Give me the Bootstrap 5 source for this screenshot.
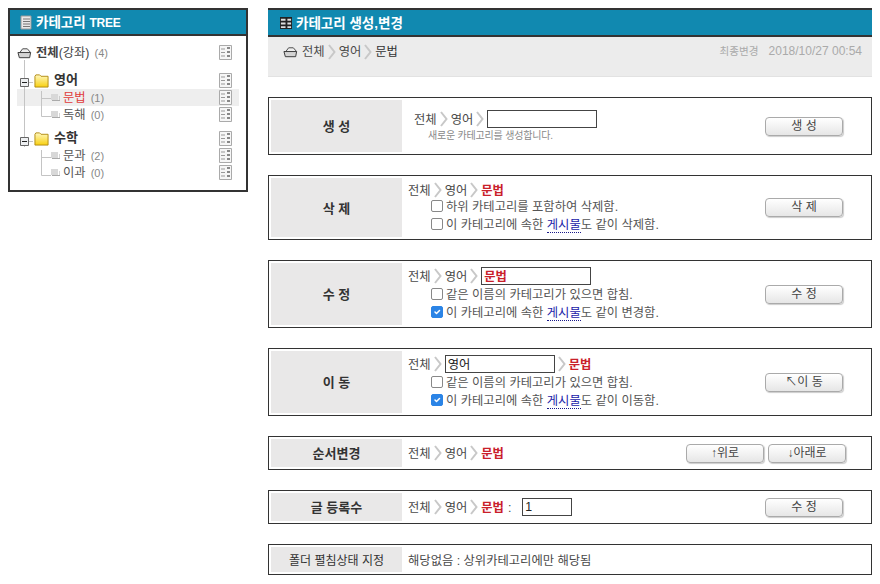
<!DOCTYPE html>
<html lang="ko">
<head>
    <meta charset="UTF-8">
    <meta name="viewport" content="width=device-width, initial-scale=1">
    <title>카테고리 TREE</title>
    <link href="https://cdn.jsdelivr.net/npm/bootstrap@5.3.0/dist/css/bootstrap.min.css" rel="stylesheet">
    <style>
        body { font-family: "Liberation Sans", "Noto Sans CJK KR", sans-serif; font-size: 12.3px; line-height: 18px; color: #4a4a4a; background: #fff; }
        .page-wrap { padding: 8px; width: 880px; gap: 20px; }
        .tree-panel { width: 240px; height: 184px; border: 2px solid #333; position: relative; flex: none; }
        .panel-head { height: 26px; background: #1189b0; border-bottom: 2px solid #333; color: #fff; font-size: 13.5px; font-weight: 700; padding-left: 10px; gap: 4px; }
        .panel-head span { padding-top: 2px; }
        .latin-word { font-size: 12px; letter-spacing: -.2px; }
        .tree-body { padding: 8px 7px 0 7px; }
        .tree-row { height: 17px; }
        .tree-row .tree-act { margin-left: auto; margin-right: 7px; }
        .tree-row.is-sel { background: #eeeeee; }
        .tree-root { font-weight: 700; color: #444; }
        .tree-root span { font-weight: 400; }
        .tree-count { color: #888; font-size: 11px; margin-left: 5px; font-weight: 400; }
        .tree-group { margin-top: 11px; padding-left: 17px; font-size: 13px; font-weight: 700; color: #333; }
        .tree-group.second { margin-top: 7px; }
        .tree-group > div { padding-bottom: 2px; }
        .tree-leaf { padding-left: 34px; color: #555; }
        .tree-leaf.is-sel { color: #e03a3a; }
        .tree-row svg.tree-folder { margin-right: 5px; }
        .tree-row svg.tree-doc { margin-right: 3px; }
        .tree-lines { position: absolute; left: 0; top: 0; pointer-events: none; }
        .right-col { width: 604px; flex: none; }
        .right-head { height: 29px; background: #1189b0; border-top: 2px solid #333; border-bottom: 2px solid #333; color: #fff; font-size: 13.5px; font-weight: 700; padding-left: 12px; gap: 4px; }
        .right-head span { padding-top: 2px; }
        .path-bar { height: 40px; background: #ececec; border-bottom: 1px solid #e2e2e2; padding: 6px 10px 0 15px; }
        .path-bar .path-end { color: #333; }
        .path-date { color: #aaa; margin-top: -1px; font-size: 12px; }
        .path-date b { font-weight: 400; font-size: 10.6px; margin-right: 10px; }
        .path-nav { gap: 3px; }
        .path-folder { margin-right: 1px; }
        .op-box { border: 1px solid #333; padding: 2px; margin-top: 20px; }
        .op-title { width: 131px; flex: none; background: #e9e8e8; color: #333; font-weight: 700; font-size: 13px; padding-top: 2px; }
        .op-title.plain { font-weight: 400; font-size: 12px; }
        .op-main { padding-left: 6px; flex: 1 1 auto; }
        .op-main.is-wide { padding-left: 12px; }
        .op-side { width: 104px; flex: none; }
        .op-lines { padding-top: 4px; }
        .tall-52 { height: 52px; }
        .tall-59 { height: 59px; }
        .tall-62 { height: 62px; }
        .tall-28 { height: 28px; }
        .tall-25 { height: 25px; }
        .crumb { gap: 3px; height: 18px; }
        .crumb span, .crumb em, .check-line > span, .plain-note { padding-top: 2px; }
        .crumb.is-first { padding-top: 10px; height: 28px; }
        .is-tight .crumb { height: 15px; }
        .crumb em { font-style: normal; color: #c9202a; font-weight: 700; }
        .colon-mark { margin-left: 1px; }
        .op-input { width: 110px; height: 18px; border: 1px solid #444; background: #fff; padding: 0 2px; font-size: 12.3px; line-height: 16px; color: #222; font-family: inherit; outline: 0; border-radius: 0; }
        .op-input.is-red { color: #c9202a; font-weight: 700; }
        .op-input.is-short { width: 50px; margin-left: 8px; }
        .check-line { padding-left: 23px; gap: 3px; height: 18px; color: #555; }
        .check-line .form-check-input { width: 12px; height: 12px; margin: 0; border-color: #888; border-radius: 2px; }
        .check-line .form-check-input:checked { background-color: #2b84e6; border-color: #2b84e6; }
        .post-word { color: #1a1aa8; border-bottom: 1px dotted #1a1a8a; line-height: 14px; }
        .hint-line { padding-left: 14px; padding-top: 1px; color: #888; font-size: 10px; line-height: 14px; letter-spacing: -.2px; }
        .old-btn { width: 78px; height: 19px; padding: 0; font-size: 12px; line-height: 17px; color: #444; border: 1px solid #aaa; border-radius: 4px; background: linear-gradient(#fff, #e6e6e6); box-shadow: 1px 1px 1px #ccc; }
        .old-btn:hover { color: #444; border-color: #aaa; }
        .order-btns { margin-right: 23px; }
    </style>
</head>
<body>
    <svg width="0" height="0" class="position-absolute">
        <defs><linearGradient id="fold-grad" x1="0" y1="0" x2="0" y2="1"><stop offset="0" stop-color="#fff8c0"/><stop offset="1" stop-color="#f8d010"/></linearGradient></defs>
        <symbol id="i-act" viewBox="0 0 13 15">
            <path d="M.5.5h12v14H.5z" fill="#f6f6f6" stroke="#aaa"/>
            <path d="M2 4h4M2 7.500h4M2 11h4" stroke="#999" fill="none"/>
            <path d="M8 2h3v2H8zM8 6h3v2H8zM8 10h3v2H8z" fill="#888"/>
        </symbol>
        <symbol id="i-open" viewBox="0 0 16 12">
            <path d="M3 5.500L6 1.500h5l3.500 4" fill="#eee" stroke="#444"/>
            <path d="M1 5.500h13.500l-1 5.500H2.500z" fill="#d4d4d4" stroke="#333"/>
        </symbol>
        <symbol id="i-folder" viewBox="0 0 16 15">
            <path d="M1 14.500V3l1-1.500h4L7.500 3H15v11.500z" fill="url(#fold-grad)" stroke="#b08a10"/>
        </symbol>
        <symbol id="i-doc" viewBox="0 0 9 8">
            <path d="M0 0h7v6H0z" fill="#d8d8d8"/><path d="M1 6.500h8V2" fill="none" stroke="#aaa"/>
        </symbol>
        <symbol id="i-chev" viewBox="0 0 8 16">
            <path d="M1 1l5.500 7L1 15" fill="none" stroke="#c8c8c8" stroke-width="2"/>
        </symbol>
        <symbol id="i-book" viewBox="0 0 12 15">
            <path d="M1 1h10v13H1z" fill="#e8e8e8" stroke="#999"/>
            <path d="M3 4h7M3 6.500h7M3 9h7M3 11.500h7" stroke="#777"/>
        </symbol>
        <symbol id="i-head" viewBox="0 0 13 13">
            <path d="M0 0h13v13H0z" fill="#222"/>
            <path d="M1 2h5v2H1zM1 6h5v2H1zM1 10h5v2H1zM8 2h4v2H8zM8 6h4v2H8zM8 10h4v2H8z" fill="#ddd"/>
        </symbol>
    </svg>

    <div class="page-wrap d-flex align-items-start">
        <div class="tree-panel">
            <div class="panel-head d-flex align-items-center">
                <svg width="12" height="15"><use href="#i-book"/></svg>
                <span>카테고리 <b class="latin-word">TREE</b></span>
            </div>
            <div class="tree-body">
                <div class="tree-row tree-root d-flex align-items-center">
                    <svg width="15" height="12" class="me-1"><use href="#i-open"/></svg>
                    <div>전체<span>(강좌)</span><span class="tree-count">(4)</span></div>
                    <svg class="tree-act" width="13" height="15"><use href="#i-act"/></svg>
                </div>
                <div class="tree-row tree-group d-flex align-items-center">
                    <svg class="tree-folder" width="15" height="15"><use href="#i-folder"/></svg>
                    <div>영어</div>
                    <svg class="tree-act" width="13" height="15"><use href="#i-act"/></svg>
                </div>
                <div class="tree-row tree-leaf is-sel d-flex align-items-center">
                    <svg class="tree-doc" width="9" height="8"><use href="#i-doc"/></svg>
                    <div>문법<span class="tree-count">(1)</span></div>
                    <svg class="tree-act" width="13" height="15"><use href="#i-act"/></svg>
                </div>
                <div class="tree-row tree-leaf d-flex align-items-center">
                    <svg class="tree-doc" width="9" height="8"><use href="#i-doc"/></svg>
                    <div>독해<span class="tree-count">(0)</span></div>
                    <svg class="tree-act" width="13" height="15"><use href="#i-act"/></svg>
                </div>
                <div class="tree-row tree-group second d-flex align-items-center">
                    <svg class="tree-folder" width="15" height="15"><use href="#i-folder"/></svg>
                    <div>수학</div>
                    <svg class="tree-act" width="13" height="15"><use href="#i-act"/></svg>
                </div>
                <div class="tree-row tree-leaf d-flex align-items-center">
                    <svg class="tree-doc" width="9" height="8"><use href="#i-doc"/></svg>
                    <div>문과<span class="tree-count">(2)</span></div>
                    <svg class="tree-act" width="13" height="15"><use href="#i-act"/></svg>
                </div>
                <div class="tree-row tree-leaf d-flex align-items-center">
                    <svg class="tree-doc" width="9" height="8"><use href="#i-doc"/></svg>
                    <div>이과<span class="tree-count">(0)</span></div>
                    <svg class="tree-act" width="13" height="15"><use href="#i-act"/></svg>
                </div>
            </div>
            <!-- connector lines over the tree, origin is 10,10 on the page -->
            <svg class="tree-lines" width="236" height="180">
                <path d="M14.500 50v87M18 72.500h5M18 131.500h5M31.500 81v25.500M31.500 88.500h9.500M31.500 106.500h9.500M31.500 140v25.500M31.500 147.500h9.500M31.500 165.500h9.500" fill="none" stroke="#c4c4c4"/>
                <path d="M10.500 68.500h8v8h-8zM10.500 127.500h8v8h-8z" fill="#eef0f2" stroke="#666"/>
                <path d="M12 72.500h5M12 131.500h5" stroke="#222"/>
            </svg>
        </div>

        <div class="right-col">
            <div class="right-head d-flex align-items-center">
                <svg width="12" height="12"><use href="#i-head"/></svg>
                <span>카테고리 생성,변경</span>
            </div>
            <div class="path-bar d-flex justify-content-between align-items-start">
                <div class="path-nav d-flex align-items-center">
                    <svg width="15" height="12" class="path-folder"><use href="#i-open"/></svg>
                    <span>전체</span>
                    <svg width="8" height="16"><use href="#i-chev"/></svg>
                    <span>영어</span>
                    <svg width="8" height="16"><use href="#i-chev"/></svg>
                    <span class="path-end">문법</span>
                </div>
                <div class="path-date"><b>최종변경</b>2018/10/27 00:54</div>
            </div>

            <div class="op-box d-flex">
                <div class="op-title tall-52 d-flex align-items-center justify-content-center">생 성</div>
                <div class="op-main is-wide">
                    <div class="crumb is-first d-flex align-items-center">
                        <span>전체</span><svg width="8" height="16"><use href="#i-chev"/></svg>
                        <span>영어</span><svg width="8" height="16"><use href="#i-chev"/></svg>
                        <input class="op-input" type="text" value="">
                    </div>
                    <div class="hint-line">새로운 카테고리를 생성합니다.</div>
                </div>
                <div class="op-side d-flex align-items-center"><button class="btn old-btn" type="button">생 성</button></div>
            </div>

            <div class="op-box d-flex">
                <div class="op-title tall-59 d-flex align-items-center justify-content-center">삭 제</div>
                <div class="op-main op-lines is-tight">
                    <div class="crumb d-flex align-items-center">
                        <span>전체</span><svg width="8" height="16"><use href="#i-chev"/></svg>
                        <span>영어</span><svg width="8" height="16"><use href="#i-chev"/></svg>
                        <em>문법</em>
                    </div>
                    <div class="check-line d-flex align-items-center"><input class="form-check-input" type="checkbox"><span>하위 카테고리를 포함하여 삭제함.</span></div>
                    <div class="check-line d-flex align-items-center"><input class="form-check-input" type="checkbox"><span>이 카테고리에 속한 <span class="post-word">게시물</span>도 같이 삭제함.</span></div>
                </div>
                <div class="op-side d-flex align-items-center"><button class="btn old-btn" type="button">삭 제</button></div>
            </div>

            <div class="op-box d-flex">
                <div class="op-title tall-62 d-flex align-items-center justify-content-center">수 정</div>
                <div class="op-main op-lines">
                    <div class="crumb d-flex align-items-center">
                        <span>전체</span><svg width="8" height="16"><use href="#i-chev"/></svg>
                        <span>영어</span><svg width="8" height="16"><use href="#i-chev"/></svg>
                        <input class="op-input is-red" type="text" value="문법">
                    </div>
                    <div class="check-line d-flex align-items-center"><input class="form-check-input" type="checkbox"><span>같은 이름의 카테고리가 있으면 합침.</span></div>
                    <div class="check-line d-flex align-items-center"><input class="form-check-input" type="checkbox" checked><span>이 카테고리에 속한 <span class="post-word">게시물</span>도 같이 변경함.</span></div>
                </div>
                <div class="op-side d-flex align-items-center"><button class="btn old-btn" type="button">수 정</button></div>
            </div>

            <div class="op-box d-flex">
                <div class="op-title tall-62 d-flex align-items-center justify-content-center">이 동</div>
                <div class="op-main op-lines">
                    <div class="crumb d-flex align-items-center">
                        <span>전체</span><svg width="8" height="16"><use href="#i-chev"/></svg>
                        <input class="op-input" type="text" value="영어">
                        <svg width="8" height="16"><use href="#i-chev"/></svg>
                        <em>문법</em>
                    </div>
                    <div class="check-line d-flex align-items-center"><input class="form-check-input" type="checkbox"><span>같은 이름의 카테고리가 있으면 합침.</span></div>
                    <div class="check-line d-flex align-items-center"><input class="form-check-input" type="checkbox" checked><span>이 카테고리에 속한 <span class="post-word">게시물</span>도 같이 이동함.</span></div>
                </div>
                <div class="op-side d-flex align-items-center"><button class="btn old-btn" type="button">↖이 동</button></div>
            </div>

            <div class="op-box d-flex">
                <div class="op-title tall-28 d-flex align-items-center justify-content-center">순서변경</div>
                <div class="op-main d-flex align-items-center">
                    <div class="crumb d-flex align-items-center">
                        <span>전체</span><svg width="8" height="16"><use href="#i-chev"/></svg>
                        <span>영어</span><svg width="8" height="16"><use href="#i-chev"/></svg>
                        <em>문법</em>
                    </div>
                </div>
                <div class="d-flex align-items-center gap-1 order-btns">
                    <button class="btn old-btn" type="button">↑위로</button>
                    <button class="btn old-btn" type="button">↓아래로</button>
                </div>
            </div>

            <div class="op-box d-flex">
                <div class="op-title tall-28 d-flex align-items-center justify-content-center">글 등록수</div>
                <div class="op-main d-flex align-items-center">
                    <div class="crumb d-flex align-items-center">
                        <span>전체</span><svg width="8" height="16"><use href="#i-chev"/></svg>
                        <span>영어</span><svg width="8" height="16"><use href="#i-chev"/></svg>
                        <em>문법</em><span class="colon-mark">:</span>
                        <input class="op-input is-short" type="text" value="1">
                    </div>
                </div>
                <div class="op-side d-flex align-items-center"><button class="btn old-btn" type="button">수 정</button></div>
            </div>

            <div class="op-box d-flex">
                <div class="op-title plain tall-25 d-flex align-items-center justify-content-center">폴더 펼침상태 지정</div>
                <div class="op-main d-flex align-items-center"><span class="plain-note">해당없음 : 상위카테고리에만 해당됨</span></div>
            </div>
        </div>
    </div>

    <script src="https://cdn.jsdelivr.net/npm/bootstrap@5.3.0/dist/js/bootstrap.bundle.min.js"></script>
</body>
</html>
